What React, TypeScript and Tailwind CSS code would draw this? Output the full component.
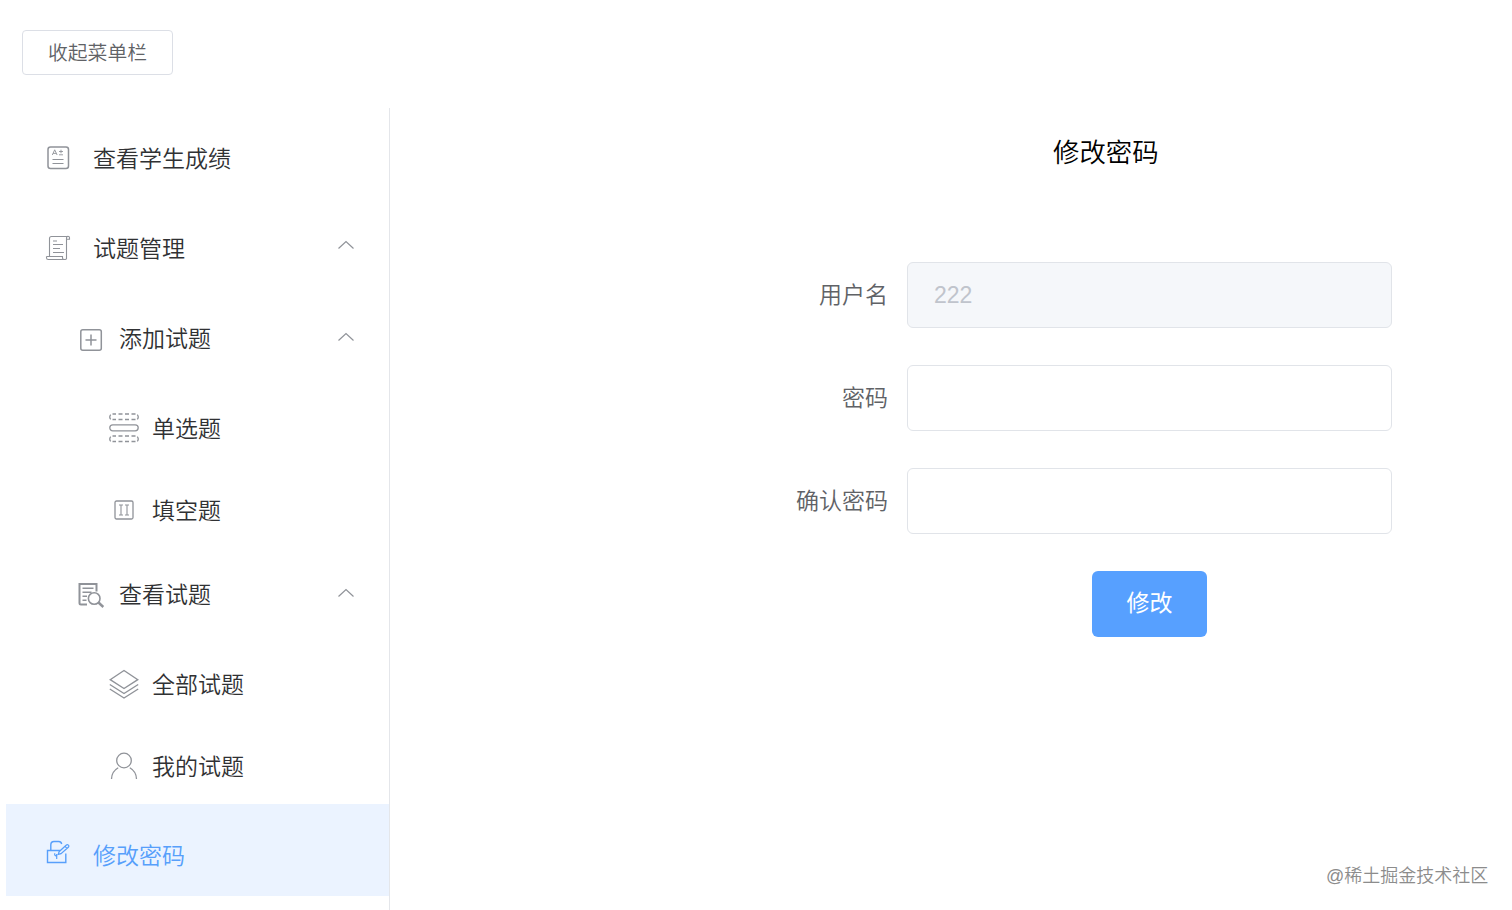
import React from 'react'

type MenuRow = {
  label: string
  icon: React.ReactNode
  level: 1 | 2 | 3
  gap: string
  arrow?: string
}

const indent = {
  1: 'pl-[37px]',
  2: 'pl-[70px]',
  3: 'pl-[103px]',
}

const iconBox = {
  1: 'w-[30px] mr-5',
  2: 'w-[30px] mr-[13px]',
  3: 'w-[30px] mr-[13px]',
}

const menu: MenuRow[] = [
  { label: '查看学生成绩', icon: <ScoreIcon />, level: 1, gap: 'mt-[5px]' },
  { label: '试题管理', icon: <ScrollIcon />, level: 1, gap: 'mt-2', arrow: '-translate-y-1' },
  { label: '添加试题', icon: <AddIcon />, level: 2, gap: 'mt-2', arrow: '-translate-y-0.5' },
  { label: '单选题', icon: <ChoiceIcon />, level: 3, gap: 'mt-2' },
  { label: '填空题', icon: <BlankIcon />, level: 3, gap: 'mt-0' },
  { label: '查看试题', icon: <SearchDocIcon />, level: 2, gap: 'mt-0.5', arrow: '-translate-y-0.5' },
  { label: '全部试题', icon: <LayersIcon />, level: 3, gap: 'mt-2' },
  { label: '我的试题', icon: <UserIcon />, level: 3, gap: 'mt-0' },
]

export default function App() {
  return (
    <div className="relative h-[910px] w-[1512px] overflow-hidden bg-white flex flex-col font-[350] font-['Liberation_Sans','Noto_Sans_CJK_SC',sans-serif]">
      <header className="h-[108px] shrink-0 pl-[22px] pt-[30px]">
        <button className="w-[151px] h-[45px] pt-0.5 rounded border border-[#dcdfe6] text-[19.8px] leading-none text-[#606266]">
          收起菜单栏
        </button>
      </header>

      <div className="flex flex-1 min-h-0">
        <aside className="w-[390px] shrink-0 border-r border-[#e4e6ea] pl-1.5">
          <nav className="flex flex-col">
            {menu.map((row) => (
              <MenuItem key={row.label} {...row} />
            ))}
            <a className="mt-px h-[92px] flex items-center pl-[37px] bg-[#ebf3ff] text-[#579ffb]">
              <span className="w-[30px] mr-5 flex justify-center pt-1">
                <LockEditIcon />
              </span>
              <span className="text-[23px] leading-none pt-3">修改密码</span>
            </a>
          </nav>
        </aside>

        <main className="flex-1 pl-[347px] pr-[120px]">
          <h1 className="mt-[30px] ml-[316px] text-[26.4px] leading-[30px] text-black">修改密码</h1>
          <form className="mt-[94px] ml-[-17px] flex flex-col gap-[37px]">
            <Field label="用户名" value="222" disabled />
            <Field label="密码" />
            <Field label="确认密码" />
            <div className="pl-[187px] flex justify-center">
              <button
                type="button"
                className="w-[115px] h-[66px] pb-0.5 rounded-md bg-[#57a0ff] text-white text-[23px] leading-none font-normal"
              >
                修改
              </button>
            </div>
          </form>
        </main>
      </div>

      <div className="absolute left-[1326px] top-[864px] text-[18px] leading-6 text-[#8c8c8c] whitespace-nowrap">
        @稀土掘金技术社区
      </div>
    </div>
  )
}

function MenuItem({ label, icon, level, gap, arrow }: MenuRow) {
  return (
    <a className={`h-[82px] flex items-center pt-2.5 text-[#303133] ${gap} ${indent[level]}`}>
      <span className={`flex justify-center text-[#909399] ${iconBox[level]}`}>{icon}</span>
      <span className="text-[23px] leading-none">{label}</span>
      {arrow && (
        <svg className={`ml-auto mr-[34px] text-[#909399] ${arrow}`} width="18" height="10" viewBox="0 0 18 10" fill="none" stroke="currentColor" strokeWidth="1.2">
          <path d="M1.5 8.500 9 1.500l7.500 7" />
        </svg>
      )}
    </a>
  )
}

function Field({ label, value, disabled }: { label: string; value?: string; disabled?: boolean }) {
  return (
    <div className="flex items-center">
      <label className="w-[168px] mr-[19px] text-right text-[23px] leading-none text-[#606266]">{label}</label>
      <input
        className="flex-1 min-w-0 h-[66px] rounded-md border border-[#e1e4e9] bg-white px-[26px] text-[23px] disabled:bg-[#f5f7fa] disabled:text-[#c0c4cc]"
        defaultValue={value}
        disabled={disabled}
      />
    </div>
  )
}

function ScoreIcon() {
  return (
    <svg className="-mt-0.5" width="24" height="26" viewBox="0 0 24 26" fill="none" stroke="currentColor">
      <rect x="2" y="2" width="20.500" height="21.500" rx="2.500" strokeWidth="1.500" />
      <path d="M6.300 10 8.700 4.800l2.400 5.200M7.100 8.400h3.200M13 6.500h4M15 4.700v3.600M13 9.800h4" strokeWidth=".9" />
      <path d="M6.500 14.500h11M6.500 18.500h11" strokeWidth="1.100" />
    </svg>
  )
}

function ScrollIcon() {
  return (
    <svg className="-mt-0.5" width="26" height="26" viewBox="0 0 26 26" fill="none" stroke="currentColor" strokeWidth="1.100">
      <path d="M4.500 21V3.500a2 2 0 0 1 2-2h16.200M21.500 24V3a1.500 1.500 0 0 1 3-.3v1.500h-2.800" />
      <path d="M1.500 21.500h16v1.800c0 1.600 4 1.600 4 .2M1.500 21.500v1.200c0 1 .8 1.800 1.800 1.800h17" />
      <path d="M8 6h4M8 9.500h10M8 13.500h7M8 17.500h11" />
    </svg>
  )
}

function AddIcon() {
  return (
    <svg className="mt-0.5" width="24" height="24" viewBox="0 0 24 24" fill="none" stroke="currentColor" strokeWidth="1.500">
      <rect x="1.800" y="1.800" width="20.500" height="20.500" rx="2" />
      <path d="M12 6.500v11M6.500 12h11" />
    </svg>
  )
}

function ChoiceIcon() {
  return (
    <svg className="-mt-0.5" width="30" height="32" viewBox="0 0 30 32" fill="none" stroke="currentColor" strokeWidth="1.300">
      <path d="M3.500 2H7M9.500 2h4M16 2h4M22.500 2H26.500M3.500 7.500H7M9.500 7.500h4M16 7.500h4M22.500 7.500H26.500M1.700 2.600Q-.2 5 1.700 7.400M28.300 2.600Q30.200 5 28.300 7.400" />
      <rect x=".8" y="12.800" width="28.400" height="6" rx="3" />
      <path d="M3.500 24H7M9.500 24h4M16 24h4M22.500 24H26.500M3.500 29.500H7M9.500 29.500h4M16 29.500h4M22.500 29.500H26.500M1.700 24.600Q-.2 27 1.700 29.400M28.300 24.600Q30.200 27 28.300 29.400" />
    </svg>
  )
}

function BlankIcon() {
  return (
    <svg className="-mt-0.5" width="20" height="20" viewBox="0 0 20 20" fill="none" stroke="currentColor" strokeWidth="1.300">
      <rect x="1" y="1" width="18" height="18" rx="1.500" />
      <path d="M5 5h4M7 5v10M5 15h4M11 5h4M13 5v10M11 15h4" strokeWidth="1.100" />
    </svg>
  )
}

function SearchDocIcon() {
  return (
    <svg width="28" height="28" viewBox="0 0 28 28" fill="none" stroke="currentColor">
      <path d="M10 23.500H4a1.500 1.500 0 0 1-1.500-1.500V3h17v7.500" strokeWidth="2" />
      <path d="M5.500 7.200h11M5.500 11.200h9M5.500 15.200h4.500M5.500 19.200h4" strokeWidth="1.400" />
      <circle cx="17.200" cy="17.500" r="5.800" strokeWidth="1.600" />
      <path d="m21.500 21.500 4.800 4.500" strokeWidth="2.400" />
    </svg>
  )
}

function LayersIcon() {
  return (
    <svg className="-mt-0.5" width="30" height="30" viewBox="0 0 30 30" fill="none" stroke="currentColor" strokeWidth="1.400">
      <path d="m15 1.500 13.800 9.200L15 19.500 1.200 10.700z" />
      <path d="m.8 15.500 14.200 9 14.200-9M.8 20l14.200 9 14.200-9" />
    </svg>
  )
}

function UserIcon() {
  return (
    <svg className="-mt-0.5" width="28" height="28" viewBox="0 0 28 28" fill="none" stroke="currentColor" strokeWidth="1.300">
      <circle cx="14" cy="8.500" r="7.300" />
      <path d="M1.500 27c.2-5 2.800-9 6.700-11.200M26.500 27c-.2-5-2.800-9-6.700-11.200" />
    </svg>
  )
}

function LockEditIcon() {
  return (
    <svg width="24" height="24" viewBox="0 0 24 24" fill="none" stroke="currentColor" strokeWidth="1.400">
      <path d="M14 10.500H1.500v12h18.300V13.500M4.800 10.500V5c0-2 1.300-3.500 3.200-3.500h4.700c1.700 0 2.700 1 3 2.500" />
      <path d="m12.300 14.300.8-2.600 7-6.500c1.700-1.400 3.700.4 2.200 2.100L15 13.600zM19 6.300l2 2M10.700 14v5M10.700 16.500l-2-1.500v-1.700" strokeWidth="1.200" />
    </svg>
  )
}
